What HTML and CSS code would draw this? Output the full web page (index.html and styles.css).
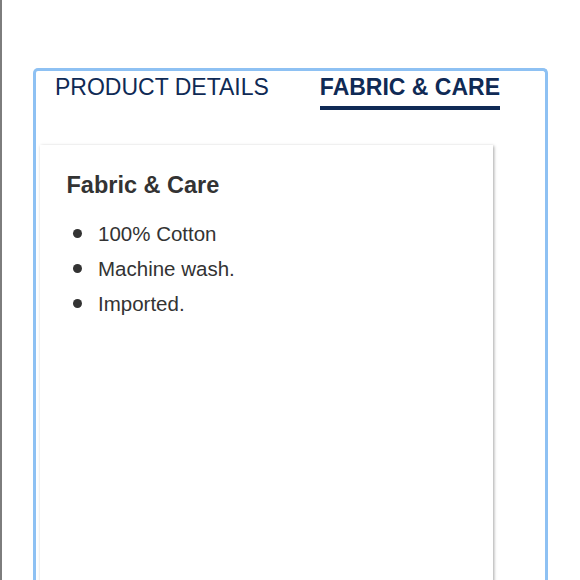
FILE: index.html
```html
<!DOCTYPE html>
<html>
<head>
<meta charset="utf-8">
<link rel="stylesheet" href="styles.css">
</head>
<body>
<div class="page">
  <div class="panel">
    <div class="tabs">
      <div class="tab">PRODUCT DETAILS</div>
      <div class="tab active">FABRIC &amp; CARE</div>
    </div>
    <div class="card">
      <h3 class="card-title">Fabric &amp; Care</h3>
      <ul class="list">
        <li class="item"><span class="dot"></span>100% Cotton</li>
        <li class="item"><span class="dot"></span>Machine wash.</li>
        <li class="item"><span class="dot"></span>Imported.</li>
      </ul>
    </div>
  </div>
</div>
</body>
</html>
```
FILE: styles.css
```css
html, body {
  margin: 0;
  padding: 0;
  background: #ffffff;
  overflow: hidden;
}
.page {
  height: 580px;
  border-left: 2px solid #7d7d7d;
  box-sizing: border-box;
  padding-top: 68px;
  padding-left: 31px;
  font-family: "Liberation Sans", Arial, Helvetica, sans-serif;
}
.panel {
  width: 515px;
  height: 512px;
  box-sizing: border-box;
  border: 3px solid #8ec1f3;
  border-bottom: none;
  border-radius: 5px 5px 0 0;
  padding: 3px 0 0 4px;
  overflow: hidden;
}
.tabs {
  display: flex;
  gap: 51px;
  padding-left: 15px;
}
.tab {
  font-size: 23px;
  line-height: 26px;
  color: #0f2a55;
  padding-bottom: 6px;
  border-bottom: 4px solid transparent;
}
.tab.active {
  font-weight: bold;
  border-bottom-color: #0f2a55;
}
.card {
  margin-top: 35px;
  width: 453px;
  height: 440px;
  box-sizing: border-box;
  padding: 26px 0 0 26.5px;
  background: #fff;
  box-shadow: 1px 1px 3px rgba(0, 0, 0, 0.35);
}
.card-title {
  margin: 0;
  font-size: 23.5px;
  line-height: 28px;
  font-weight: bold;
  color: #333333;
}
.list {
  list-style: none;
  margin: 17px 0 0 0;
  padding: 0 0 0 6px;
}
.item {
  display: flex;
  align-items: center;
  font-size: 20.5px;
  line-height: 35px;
  color: #333333;
}
.dot {
  width: 9px;
  height: 9px;
  border-radius: 50%;
  background: #333333;
  margin-right: 16.5px;
  flex: none;
}
```
